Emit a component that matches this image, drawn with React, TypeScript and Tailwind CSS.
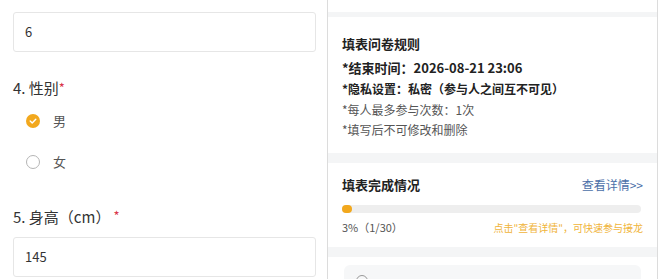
export default function App() {
  const font = { fontFamily: '"Noto Sans CJK SC", "Noto Sans", sans-serif' }
  return (
    <div className="w-[660px] h-[279px] overflow-hidden bg-white flex text-[#333]" style={font}>
      {/* left: form */}
      <div className="w-[328px] shrink-0 border-r border-[#dcdcdc] pt-[12px]">
        <div className="ml-[13px] mr-[11px] h-[40px] border border-[#e6e6e6] rounded-[3px] flex items-center px-[11px] text-[13px] text-[#333]">
          6
        </div>
        <div className="ml-[13px] mt-[26px] h-[20px] flex items-center text-[15px] text-[#333]">
          4. 性别<span className="text-[#d9364a] text-[13px] self-start">*</span>
        </div>
        <div className="ml-[26px] mt-[12px] h-[22px] flex items-center gap-[13px]">
          <span className="w-[14px] h-[14px] rounded-full bg-[#f2a81d] flex items-center justify-center">
            <svg width="8" height="8" viewBox="0 0 8 8" fill="none">
              <path d="M1.2 4.1 L3.2 6 L6.8 2.2" stroke="white" strokeWidth="1.4" strokeLinecap="round" strokeLinejoin="round" />
            </svg>
          </span>
          <span className="text-[13px] text-[#555]">男</span>
        </div>
        <div className="ml-[26px] mt-[19px] h-[22px] flex items-center gap-[13px]">
          <span className="w-[14px] h-[14px] rounded-full border border-[#b5b5b5]" />
          <span className="text-[13px] text-[#555]">女</span>
        </div>
        <div className="ml-[13px] mt-[33px] h-[22px] flex items-center text-[15px] text-[#333]">
          5. 身高（cm）<span className="text-[#d9364a] text-[13px] self-start ml-[3px]">*</span>
        </div>
        <div className="ml-[13px] mr-[11px] mt-[9px] h-[40px] border border-[#e6e6e6] rounded-[3px] flex items-center px-[11px] text-[13px] text-[#333]">
          145
        </div>
      </div>

      {/* right: rules & progress */}
      <div className="w-[330px] shrink-0 border-r border-[#dcdcdc] flex flex-col">
        <div className="h-[12px] shrink-0 bg-white" />
        <div className="h-[5px] shrink-0 bg-[#f4f5f6]" />
        <div className="px-[14px] pt-[17px] h-[136px] shrink-0">
          <div className="text-[13px] font-bold text-[#222] leading-[20px]">填表问卷规则</div>
          <div className="mt-[4px] text-[13px] font-bold text-[#222] leading-[20px]">*结束时间：2026-08-21 23:06</div>
          <div className="mt-[1px] text-[12px] font-bold text-[#222] leading-[20px]">*隐私设置：私密（参与人之间互不可见）</div>
          <div className="mt-[1px] text-[12px] text-[#555] leading-[20px]">*每人最多参与次数：1次</div>
          <div className="text-[12px] text-[#555] leading-[20px]">*填写后不可修改和删除</div>
        </div>
        <div className="h-[10px] shrink-0 bg-[#f4f5f6]" />
        <div className="px-[14px] pt-[12px] h-[84px] shrink-0">
          <div className="flex items-center justify-between h-[20px]">
            <span className="text-[13px] font-bold text-[#222]">填表完成情况</span>
            <span className="text-[12px] text-[#4b6fa8]">查看详情&gt;&gt;</span>
          </div>
          <div className="mt-[10px] h-[8px] rounded-full bg-[#eeeeee] mr-[2px]">
            <div className="h-[8px] w-[10px] rounded-full bg-[#f2a81d]" />
          </div>
          <div className="mt-[6px] flex items-center justify-between h-[16px]">
            <span className="text-[11px] text-[#555]">3%（1/30）</span>
            <span className="text-[10px] text-[#f0b43a]">点击"查看详情"，可快速参与接龙</span>
          </div>
        </div>
        <div className="h-[10px] shrink-0 bg-[#f4f5f6]" />
        <div className="px-[16px] pt-[8px] flex-1">
          <div className="h-[40px] rounded-[6px] bg-[#f6f7f8] px-[12px] pt-[10px]">
            <span className="block w-[12px] h-[12px] rounded-full border border-[#999]" />
          </div>
        </div>
      </div>
    </div>
  )
}
